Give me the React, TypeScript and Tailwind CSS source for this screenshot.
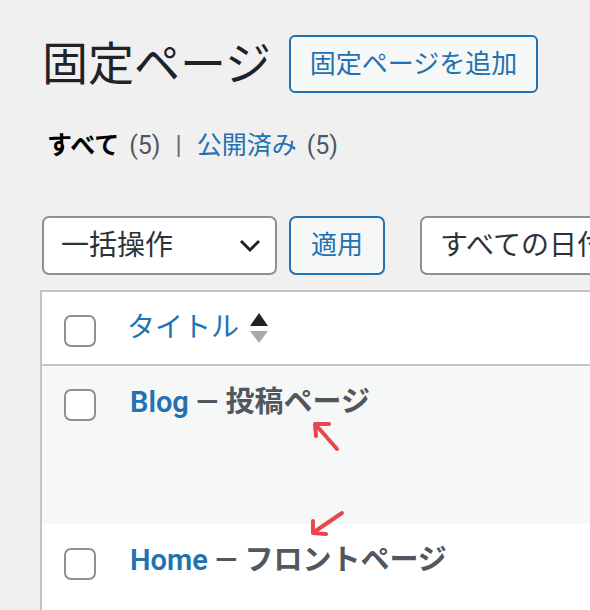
import React from "react";

const font = { fontFamily: 'Roboto, "Noto Sans CJK JP", sans-serif' };

function Checkbox() {
    return (
        <span className="block h-[32px] w-[32px] shrink-0 rounded-[7px] border-2 border-[#8c8f94] bg-white" />
    );
}

function SortIcon() {
    return (
        <svg width="18" height="32" viewBox="0 0 18 32" className="ml-[11px] mt-[2px]">
            <polygon points="9,0 18,13 0,13" fill="#1d2327" />
            <polygon points="0,18 18,18 9,30" fill="#a7aaad" />
        </svg>
    );
}

function Chevron() {
    return (
        <svg width="22" height="14" viewBox="0 0 22 14">
            <polyline
                points="2,2 11,11 20,2"
                fill="none"
                stroke="#1d2327"
                strokeWidth="3"
            />
        </svg>
    );
}

function Annotations() {
    return (
        <svg
            className="pointer-events-none absolute left-0 top-0"
            width="590"
            height="610"
            viewBox="0 0 590 610"
        >
            <g stroke="#e5484d" strokeWidth="4" strokeLinecap="round" fill="none">
                <line x1="337" y1="449" x2="316" y2="425" />
                <polyline points="329,424 315,424 316,436" strokeLinejoin="round" />
                <line x1="342" y1="513" x2="314" y2="532" />
                <polyline points="313,521 313,533 326,534" strokeLinejoin="round" />
            </g>
        </svg>
    );
}

export default function App() {
    return (
        <div
            className="relative h-[610px] w-[590px] overflow-hidden bg-[#f0f0f1] text-[#1d2327]"
            style={font}
        >
            <div className="pl-[42px] pt-[35px]">
                <div className="flex items-center gap-[18px]">
                    <h1 className="text-[46px] leading-[58px] font-normal">固定ページ</h1>
                    <button className="flex h-[58px] w-[249px] shrink-0 items-center justify-center rounded-[6px] border-2 border-[#2271b1] bg-[#f6f7f7] text-[26px] text-[#2271b1]">
                        固定ページを追加
                    </button>
                </div>

                <div className="mt-[35px] flex items-center pl-[5px] text-[25px] leading-[36px]">
                    <span className="font-bold text-black">すべて</span>
                    <span className="ml-[10px] text-[#50575e]">(5)</span>
                    <span className="mx-[15px] text-[#646970]">|</span>
                    <span className="text-[#2271b1]">公開済み</span>
                    <span className="ml-[10px] text-[#50575e]">(5)</span>
                </div>

                <div className="mt-[52px] flex items-center">
                    <div className="flex h-[59px] w-[235px] shrink-0 items-center justify-between rounded-[7px] border-2 border-[#8c8f94] bg-white pl-[17px] pr-[14px] text-[28px] text-[#2c3338]">
                        <span>一括操作</span>
                        <Chevron />
                    </div>
                    <button className="ml-[12px] flex h-[59px] w-[96px] shrink-0 items-center justify-center rounded-[7px] border-2 border-[#2271b1] bg-[#f6f7f7] text-[26px] text-[#2271b1]">
                        適用
                    </button>
                    <div className="ml-[35px] flex h-[59px] w-[240px] shrink-0 items-center whitespace-nowrap rounded-[7px] border-2 border-[#8c8f94] bg-white pl-[18px] text-[28px] text-[#2c3338]">
                        すべての日付
                    </div>
                </div>
            </div>

            <div className="ml-[40px] mt-[15px] w-[600px] border-2 border-[#c3c4c7] bg-white">
                <div className="flex h-[74px] items-center border-b-2 border-[#c3c4c7] pl-[22px]">
                    <span className="mt-[6px]">
                        <Checkbox />
                    </span>
                    <span className="ml-[31px] text-[28px] text-[#2271b1]">タイトル</span>
                    <SortIcon />
                </div>

                <div className="flex h-[158px] items-start bg-[#f6f7f7] pl-[22px] pt-[16px]">
                    <span className="mt-[7px]">
                        <Checkbox />
                    </span>
                    <span className="ml-[34px] text-[29px] leading-[40px] font-semibold text-[#50575e]">
                        <span className="text-[#2271b1]">Blog</span> — 投稿ページ
                    </span>
                </div>

                <div className="flex h-[120px] items-start bg-white pl-[22px] pt-[16px]">
                    <span className="mt-[8px]">
                        <Checkbox />
                    </span>
                    <span className="ml-[34px] text-[29px] leading-[40px] font-semibold text-[#50575e]">
                        <span className="text-[#2271b1]">Home</span> — フロントページ
                    </span>
                </div>
            </div>

            <Annotations />
        </div>
    );
}
